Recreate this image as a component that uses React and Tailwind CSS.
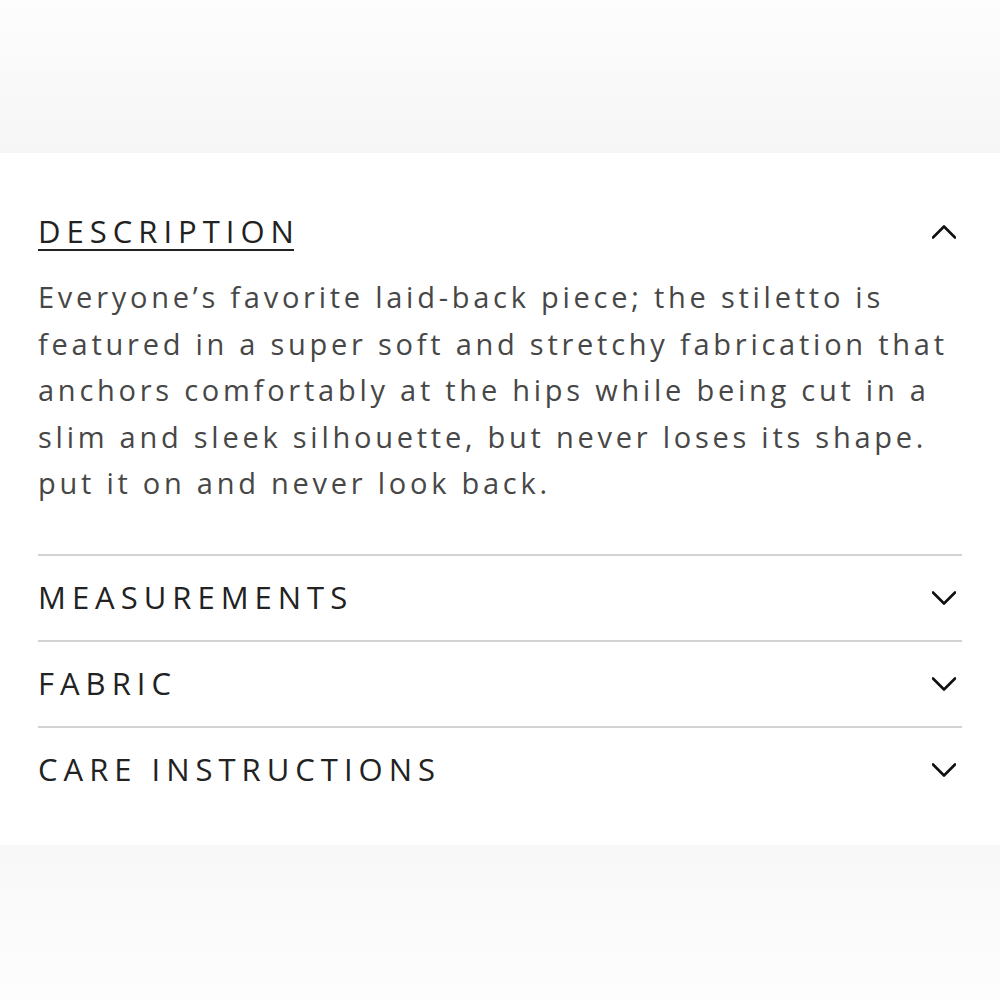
const lines = [
  "Everyone\u2019s favorite laid-back piece; the stiletto is",
  "featured in a super soft and stretchy fabrication that",
  "anchors comfortably at the hips while being cut in a",
  "slim and sleek silhouette, but never loses its shape.",
  "put it on and never look back.",
];

function Chevron({ up }) {
  return (
    <svg width="24" height="14" viewBox="0 0 24 14" className="mr-[6px]" fill="none">
      <polyline
        points={up ? "1,12.5 12,1.5 23,12.5" : "1,1.5 12,12.5 23,1.5"}
        stroke="#111"
        strokeWidth="2.6"
        strokeLinecap="round"
        strokeLinejoin="round"
      />
    </svg>
  );
}

function Row({ title }) {
  return (
    <div className="border-t-2 border-[#d2d2d2] h-[86px] flex items-center justify-between">
      <span className="text-[31px] tracking-[6px] text-[#222]">{title}</span>
      <Chevron />
    </div>
  );
}

export default function App() {
  return (
    <div className="w-[1000px] h-[1000px] bg-white flex flex-col" style={{ fontFamily: '"Open Sans", sans-serif' }}>
      <div className="h-[153px] bg-gradient-to-b from-[#fdfdfd] to-[#f6f6f6]" />
      <div className="px-[38px] pt-[57px]">
        <div className="flex items-center justify-between h-[44px]">
          <span className="text-[31px] tracking-[6px] text-[#222] border-b-2 border-[#222] leading-[36px]">
            DESCRIPTIO<span className="tracking-normal">N</span>
          </span>
          <Chevron up />
        </div>
        <div className="pt-[20px] pb-[47px] text-[29px] leading-[46.5px] tracking-[3.75px] text-[#474747]">
          {lines.map((l) => (
            <div key={l} className="whitespace-nowrap">{l}</div>
          ))}
        </div>
        <Row title="MEASUREMENTS" />
        <Row title="FABRIC" />
        <Row title="CARE INSTRUCTIONS" />
      </div>
      <div className="flex-1" />
      <div className="h-[155px] bg-gradient-to-b from-[#f8f8f8] to-[#fdfdfd]" />
    </div>
  );
}
